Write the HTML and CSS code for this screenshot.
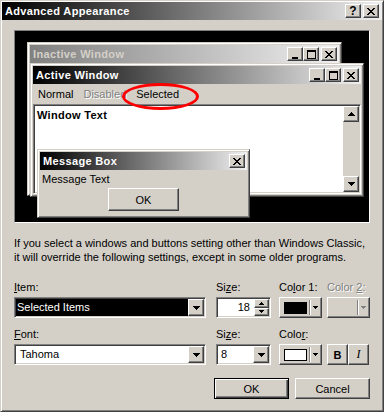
FILE: index.html
```html
<!DOCTYPE html>
<html lang="en">
<head>
  <meta charset="UTF-8">
  <title>Advanced Appearance</title>
  <link rel="stylesheet" href="styles.css">
</head>
<body>
<svg class="defs" width="0" height="0">
  <symbol id="g-close" viewBox="0 0 8 7"><path d="M0 0h2v1H0zM6 0h2v1H6zM1 1h2v1H1zM5 1h2v1H5zM2 2h4v1H2zM3 3h2v1H3zM2 4h4v1H2zM1 5h2v1H1zM5 5h2v1H5zM0 6h2v1H0zM6 6h2v1H6z"/></symbol>
  <symbol id="g-min" viewBox="0 0 9 9"><path d="M1 7h6v2H1z"/></symbol>
  <symbol id="g-max" viewBox="0 0 9 9"><path fill-rule="evenodd" d="M0 0h9v9H0zM1 2v6h7V2z"/></symbol>
  <symbol id="g-down" viewBox="0 0 7 4"><path d="M0 0h7v1H0zM1 1h5v1H1zM2 2h3v1H2zM3 3h1v1H3z"/></symbol>
  <symbol id="g-up" viewBox="0 0 7 4"><path d="M3 0h1v1H3zM2 1h3v1H2zM1 2h5v1H1zM0 3h7v1H0z"/></symbol>
  <symbol id="g-sdown" viewBox="0 0 5 3"><path d="M0 0h5v1H0zM1 1h3v1H1zM2 2h1v1H2z"/></symbol>
  <symbol id="g-sup" viewBox="0 0 5 3"><path d="M2 0h1v1H2zM1 1h3v1H1zM0 2h5v1H0z"/></symbol>
</svg>

<div class="dialog">
  <div class="caption main-caption">
    <span>Advanced Appearance</span>
    <div class="caption-buttons">
      <span class="cbtn help">?</span>
      <span class="cbtn gap"><svg width="8" height="7"><use href="#g-close"/></svg></span>
    </div>
  </div>

  <div class="dialog-body">
    <!-- preview of the scheme -->
    <div class="preview">
      <div class="win inactive-win">
        <div class="caption inactive">
          <span>Inactive Window</span>
          <div class="caption-buttons">
            <span class="cbtn"><svg width="9" height="9"><use href="#g-min"/></svg></span>
            <span class="cbtn"><svg width="9" height="9"><use href="#g-max"/></svg></span>
            <span class="cbtn gap"><svg width="8" height="7"><use href="#g-close"/></svg></span>
          </div>
        </div>
      </div>

      <div class="win active-win">
        <div class="caption">
          <span>Active Window</span>
          <div class="caption-buttons">
            <span class="cbtn"><svg width="9" height="9"><use href="#g-min"/></svg></span>
            <span class="cbtn"><svg width="9" height="9"><use href="#g-max"/></svg></span>
            <span class="cbtn gap"><svg width="8" height="7"><use href="#g-close"/></svg></span>
          </div>
        </div>
        <div class="menu">
          <span>Normal</span>
          <span class="disabled">Disabled</span>
          <span>Selected</span>
        </div>
        <div class="sunken text-area">
          <div class="window-text">Window Text</div>
          <div class="vscroll">
            <span class="raised sbtn"><svg width="7" height="4"><use href="#g-up"/></svg></span>
            <span class="raised sbtn"><svg width="7" height="4"><use href="#g-down"/></svg></span>
          </div>
        </div>
      </div>

      <div class="win msgbox">
        <div class="caption">
          <span>Message Box</span>
          <div class="caption-buttons">
            <span class="cbtn"><svg width="8" height="7"><use href="#g-close"/></svg></span>
          </div>
        </div>
        <div class="msg-text">Message Text</div>
        <span class="raised btn msg-ok">OK</span>
      </div>

      <div class="ring"></div>
    </div>

    <p class="note">If you select a windows and buttons setting other than Windows Classic,<br>it will override the following settings, except in some older programs.</p>

    <div class="fields">
      <div class="field">
        <label><u>I</u>tem:</label>
        <div class="sunken combo">
          <span class="value selected">Selected Items</span>
          <span class="raised drop"><svg width="7" height="4"><use href="#g-down"/></svg></span>
        </div>
      </div>
      <div class="field">
        <label>Si<u>z</u>e:</label>
        <div class="sunken combo spin">
          <span class="value">18</span>
          <span class="spin-btns">
            <span class="raised"><svg width="5" height="3"><use href="#g-sup"/></svg></span>
            <span class="raised"><svg width="5" height="3"><use href="#g-sdown"/></svg></span>
          </span>
        </div>
      </div>
      <div class="field">
        <label>Co<u>l</u>or 1:</label>
        <div class="raised btn color-btn">
          <span class="swatch black"></span>
          <span class="sep"></span>
          <svg width="5" height="3"><use href="#g-sdown"/></svg>
        </div>
      </div>
      <div class="field">
        <label class="disabled">Color <u>2</u>:</label>
        <div class="raised btn color-btn off">
          <span class="swatch"></span>
          <span class="sep"></span>
          <svg width="5" height="3"><use href="#g-sdown"/></svg>
        </div>
      </div>

      <div class="field">
        <label><u>F</u>ont:</label>
        <div class="sunken combo">
          <span class="value font-name">Tahoma</span>
          <span class="raised drop"><svg width="7" height="4"><use href="#g-down"/></svg></span>
        </div>
      </div>
      <div class="field">
        <label>Si<u>z</u>e:</label>
        <div class="sunken combo">
          <span class="value size-val">8</span>
          <span class="raised drop"><svg width="7" height="4"><use href="#g-down"/></svg></span>
        </div>
      </div>
      <div class="field">
        <label>Colo<u>r</u>:</label>
        <div class="raised btn color-btn">
          <span class="swatch white"></span>
          <span class="sep"></span>
          <svg width="5" height="3"><use href="#g-sdown"/></svg>
        </div>
      </div>
      <div class="field">
        <label>&nbsp;</label>
        <div class="style-btns">
          <span class="raised btn bold">B</span>
          <span class="raised btn italic">I</span>
        </div>
      </div>
    </div>

    <div class="actions">
      <span class="btn default">OK</span>
      <span class="raised btn">Cancel</span>
    </div>
  </div>
</div>
</body>
</html>
```

FILE: styles.css
```css
* {
  box-sizing: border-box;
}

body {
  margin: 0;
  background: #d4d0c8;
  font: 11px Tahoma, "Liberation Sans", Arial, sans-serif;
  color: #000;
}

.defs {
  position: absolute;
}

svg {
  display: block;
  fill: currentColor;
  shape-rendering: crispEdges;
}

.dialog {
  width: 384px;
  height: 412px;
  padding: 1px;
  border: 1px solid;
  border-color: #d4d0c8 #404040 #404040 #d4d0c8;
  box-shadow: inset 1px 1px #fff, inset -1px -1px #808080;
  background: #d4d0c8;
}

/* title bars */
.caption {
  display: flex;
  align-items: center;
  justify-content: space-between;
  height: 18px;
  padding: 0 2px 0 3px;
  font-weight: bold;
  letter-spacing: 0.35px;
  color: #fff;
  white-space: nowrap;
  background: linear-gradient(to right, #000, #f0f0f0);
}

.main-caption {
  padding-right: 3px;
}

.caption.inactive {
  color: #d4d0c8;
  background: linear-gradient(to right, #808080, #f0f0f0);
}

.caption-buttons {
  display: flex;
}

.cbtn {
  display: flex;
  align-items: center;
  justify-content: center;
  width: 16px;
  height: 14px;
  color: #000;
  background: #d4d0c8;
  border: 1px solid;
  border-color: #fff #404040 #404040 #fff;
  box-shadow: inset -1px -1px #808080;
}

.cbtn.gap {
  margin-left: 2px;
}

.cbtn.help {
  font-size: 12px;
  line-height: 1;
  letter-spacing: 0;
}

/* 3d borders */
.raised {
  background: #d4d0c8;
  border: 1px solid;
  border-color: #fff #404040 #404040 #fff;
  box-shadow: inset -1px -1px #808080;
}

.sunken {
  border: 1px solid;
  border-color: #808080 #fff #fff #808080;
  box-shadow: inset 1px 1px #404040, inset -1px -1px #d4d0c8;
}

.dialog-body {
  padding: 10px 12px 0;
}

/* preview */
.preview {
  position: relative;
  height: 193px;
  background: #000;
  border: 1px solid;
  border-color: #808080 #fff #fff #808080;
}

.win {
  position: absolute;
  display: flex;
  flex-direction: column;
  padding: 2px;
  background: #d4d0c8;
  border: 1px solid;
  border-color: #d4d0c8 #404040 #404040 #d4d0c8;
  box-shadow: inset 1px 1px #fff, inset -1px -1px #808080;
}

.inactive-win {
  left: 12px;
  top: 11px;
  width: 315px;
  height: 154px;
}

.active-win {
  left: 15px;
  top: 32px;
  width: 334px;
  height: 134px;
}

.menu {
  display: flex;
  align-items: center;
  gap: 10px;
  height: 20px;
  padding-left: 5px;
}

.disabled {
  color: #808080;
  text-shadow: 1px 1px #fff;
}

.text-area {
  flex: 1;
  display: flex;
  padding: 1px;
  background: #fff;
}

.window-text {
  flex: 1;
  padding: 3px 2px;
  line-height: 13px;
  font-weight: bold;
  letter-spacing: 0.3px;
}

.vscroll {
  display: flex;
  flex-direction: column;
  justify-content: space-between;
  width: 16px;
  background: #d4d0c8;
}

.sbtn {
  display: flex;
  align-items: center;
  justify-content: center;
  height: 16px;
}

.msgbox {
  left: 22px;
  top: 118px;
  width: 213px;
  height: 69px;
}

.msg-text {
  padding: 3px 0 0 2px;
  line-height: 13px;
}

.msg-ok {
  align-self: center;
  width: 71px;
  height: 23px;
  margin-top: 2px;
}

.ring {
  position: absolute;
  left: 107px;
  top: 52px;
  width: 77px;
  height: 27px;
  border: 3px solid #f00;
  border-radius: 50%;
}

.note {
  margin: 13px 0 0;
  line-height: 14px;
}

/* item / font settings */
.fields {
  display: grid;
  grid-template-columns: 202px 63px 48px 42px;
  row-gap: 10px;
  margin-top: 17px;
}

.field label {
  display: block;
  line-height: 13px;
  margin-bottom: 3px;
  white-space: nowrap;
}

.combo {
  display: flex;
  height: 21px;
  padding: 1px;
  background: #fff;
}

.fields .field:nth-child(1) .combo,
.fields .field:nth-child(5) .combo {
  width: 192px;
}

.fields .field:nth-child(2) .combo,
.fields .field:nth-child(6) .combo {
  width: 55px;
}

.combo .value {
  flex: 1;
  padding-left: 1px;
  line-height: 17px;
  white-space: nowrap;
}

.value.selected {
  color: #fff;
  background: #000;
}

.value.font-name {
  padding-left: 4px;
}

.value.size-val {
  padding-left: 3px;
}

.spin .value {
  padding-right: 4px;
  text-align: right;
}

.drop {
  display: flex;
  align-items: center;
  justify-content: center;
  width: 16px;
}

.spin-btns {
  display: flex;
  flex-direction: column;
  width: 15px;
}

.spin-btns span {
  flex: 1;
  display: flex;
  align-items: center;
  justify-content: center;
}

.btn {
  display: flex;
  align-items: center;
  justify-content: center;
}

.color-btn {
  justify-content: flex-start;
  width: 43px;
  height: 21px;
  padding-left: 4px;
}

.swatch {
  width: 23px;
  height: 12px;
  border: 1px solid #000;
}

.swatch.black {
  background: #000;
}

.swatch.white {
  background: #fff;
}

.color-btn.off .swatch {
  visibility: hidden;
}

.color-btn.off svg {
  color: #808080;
}

.sep {
  width: 2px;
  height: 15px;
  margin: 0 2px 0 2px;
  border-left: 1px solid #808080;
  border-right: 1px solid #fff;
}

.style-btns {
  display: flex;
}

.style-btns .btn {
  width: 21px;
  height: 21px;
}

.btn.bold {
  font-weight: bold;
}

.btn.italic {
  font: italic 12px "Liberation Serif", serif;
}

.actions {
  display: flex;
  justify-content: flex-end;
  gap: 6px;
  margin-top: 13px;
}

.actions .btn {
  width: 75px;
  height: 21px;
}

.btn.default {
  border: 1px solid #000;
  box-shadow: inset 1px 1px #fff, inset -1px -1px #404040, inset -2px -2px #808080;
}
```
